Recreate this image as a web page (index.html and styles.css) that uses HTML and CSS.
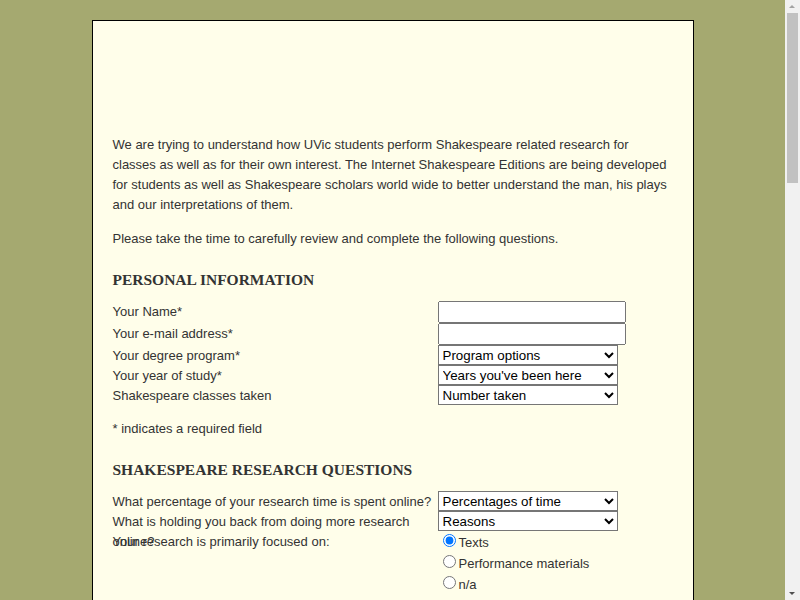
FILE: index.html
```html
<!DOCTYPE html>
<html lang="en">
<head>
<meta charset="utf-8">
<title>Shakespeare Research Survey</title>
<link rel="stylesheet" href="styles.css">
</head>
<body>
<div class="page">
  <div class="banner"></div>
  <p>We are trying to understand how UVic students perform Shakespeare related research for classes as well as for their own interest. The Internet Shakespeare Editions are being developed for students as well as Shakespeare scholars world wide to better understand the man, his plays and our interpretations of them.</p>
  <p>Please take the time to carefully review and complete the following questions.</p>

  <form class="survey">
    <h2>PERSONAL INFORMATION</h2>
    <div class="row"><label class="lbl">Your Name*</label><input class="text" type="text"></div>
    <div class="row"><label class="lbl">Your e-mail address*</label><input class="text" type="text"></div>
    <div class="row"><label class="lbl">Your degree program*</label><select class="sel"><option>Program options</option></select></div>
    <div class="row"><label class="lbl">Your year of study*</label><select class="sel"><option>Years you've been here</option></select></div>
    <div class="row"><label class="lbl">Shakespeare classes taken</label><select class="sel"><option>Number taken</option></select></div>
    <p>* indicates a required field</p>

    <h2>SHAKESPEARE RESEARCH QUESTIONS</h2>
    <div class="row"><label class="lbl">What percentage of your research time is spent online?</label><select class="sel"><option>Percentages of time</option></select></div>
    <div class="row"><label class="lbl">What is holding you back from doing more research online?</label><select class="sel"><option>Reasons</option></select></div>
    <div class="row group"><label class="lbl">Your research is primarily focused on:</label>
      <div class="choices">
        <label class="choice"><input type="radio" name="focus" checked>Texts</label>
        <label class="choice"><input type="radio" name="focus">Performance materials</label>
        <label class="choice"><input type="radio" name="focus">n/a</label>
      </div>
    </div>
    <div class="row group"><label class="lbl">Which resources do you use most often?</label>
      <div class="choices">
        <label class="choice"><input type="checkbox">Library catalogue</label>
        <label class="choice"><input type="checkbox">Online databases</label>
        <label class="choice"><input type="checkbox">Internet Shakespeare Editions</label>
        <label class="choice"><input type="checkbox">Search engines</label>
        <label class="choice"><input type="checkbox">Other</label>
      </div>
    </div>
    <div class="row"><label class="lbl">How often do you visit the ISE website?</label><select class="sel"><option>Frequency</option></select></div>
    <div class="row"><label class="lbl">Which plays do you research most?</label><select class="sel"><option>Plays</option></select></div>
    <div class="row group"><label class="lbl">Do you use annotated editions?</label>
      <div class="choices">
        <label class="choice"><input type="radio" name="annot">Yes</label>
        <label class="choice"><input type="radio" name="annot">No</label>
        <label class="choice"><input type="radio" name="annot">Sometimes</label>
      </div>
    </div>

    <h2>ONLINE RESOURCES</h2>
    <div class="row"><label class="lbl">Rate the usefulness of online texts</label><select class="sel"><option>Rating</option></select></div>
    <div class="row"><label class="lbl">Rate the usefulness of performance images</label><select class="sel"><option>Rating</option></select></div>
    <div class="row"><label class="lbl">Rate the usefulness of audio and video</label><select class="sel"><option>Rating</option></select></div>
    <div class="row"><label class="lbl">Rate the usefulness of commentary</label><select class="sel"><option>Rating</option></select></div>
    <div class="row group"><label class="lbl">Would you like more multimedia content?</label>
      <div class="choices">
        <label class="choice"><input type="radio" name="mm">Yes</label>
        <label class="choice"><input type="radio" name="mm">No</label>
        <label class="choice"><input type="radio" name="mm">n/a</label>
      </div>
    </div>
    <div class="block">
      <p>What features would make the Internet Shakespeare Editions more useful to you?</p>
      <textarea class="area" rows="6"></textarea>
    </div>
    <div class="block">
      <p>Describe a recent research project and the resources you used.</p>
      <textarea class="area" rows="6"></textarea>
    </div>

    <h2>PERFORMANCE</h2>
    <div class="row group"><label class="lbl">Have you seen a Shakespeare play performed live?</label>
      <div class="choices">
        <label class="choice"><input type="radio" name="live">Yes</label>
        <label class="choice"><input type="radio" name="live">No</label>
      </div>
    </div>
    <div class="row"><label class="lbl">How many productions have you seen?</label><select class="sel"><option>Number seen</option></select></div>
    <div class="row group"><label class="lbl">Do you watch filmed adaptations?</label>
      <div class="choices">
        <label class="choice"><input type="radio" name="film">Often</label>
        <label class="choice"><input type="radio" name="film">Occasionally</label>
        <label class="choice"><input type="radio" name="film">Never</label>
      </div>
    </div>
    <div class="block">
      <p>Any other comments?</p>
      <textarea class="area" rows="8"></textarea>
    </div>
    <div class="actions">
      <input type="submit" value="Submit">
      <input type="reset" value="Clear form">
    </div>
    <p>Thank you for taking part in this survey.</p>
  </form>
</div>
<div class="scrollbar" aria-hidden="true">
  <span class="arrow up"></span>
  <span class="thumb"></span>
  <span class="arrow down"></span>
</div>
</body>
</html>
```
FILE: styles.css
```css
html {
  background: #a5a970;
}
body {
  margin: 0 15px 0 0;
  padding: 20px 0 40px;
  background: #a5a970;
  font-family: "Liberation Sans", Arial, sans-serif;
  font-size: 13px;
  line-height: 20px;
  color: #333333;
}
.page {
  width: 560px;
  margin: 0 auto;
  padding: 0 20px 30px;
  background: #fffeea;
  border: 1px solid #000000;
}
.banner {
  height: 100px;
}
p {
  margin: 14px 0;
}
h2 {
  font-family: "Liberation Serif", "Times New Roman", serif;
  font-size: 15.5px;
  line-height: 20px;
  font-weight: bold;
  color: #333333;
  margin: 21px 0 11px;
}
.survey p {
  margin: 14px 0;
}
.row {
  display: flex;
  align-items: flex-start;
}
.row.group {
  margin-bottom: 14px;
}
.lbl {
  display: block;
  width: 325px;
  height: 19px;
  padding-top: 1px;
  flex: none;
}
.text {
  width: 188px;
  height: 22px;
  box-sizing: border-box;
  margin: 0;
  font-family: "Liberation Sans", Arial, sans-serif;
  font-size: 13.33px;
}
.sel {
  width: 180px;
  height: 20px;
  box-sizing: border-box;
  margin: 0;
  font-family: "Liberation Sans", Arial, sans-serif;
  font-size: 13.33px;
  background: #ffffff;
  color: #000000;
}
.choices {
  display: flex;
  flex-direction: column;
}
.choice {
  display: block;
  height: 21px;
  line-height: 21px;
}
.choice input {
  margin: 3px 3px 0 5px;
}
.block p {
  margin: 16px 0 6px;
}
.area {
  width: 500px;
  display: block;
}
.actions {
  margin-top: 24px;
  display: flex;
  gap: 10px;
}
.scrollbar {
  position: fixed;
  top: 0;
  right: 0;
  width: 15px;
  height: 100%;
  background: #f1f1f1;
}
.thumb {
  position: absolute;
  left: 2px;
  top: 13px;
  width: 11px;
  height: 170px;
  background: #c1c1c1;
}
.arrow {
  position: absolute;
  left: 4px;
  width: 0;
  height: 0;
  border-left: 3.5px solid transparent;
  border-right: 3.5px solid transparent;
}
.arrow.up {
  top: 5px;
  border-bottom: 3.5px solid #a3a3a3;
}
.arrow.down {
  bottom: 5px;
  border-top: 3.5px solid #505050;
}
```
